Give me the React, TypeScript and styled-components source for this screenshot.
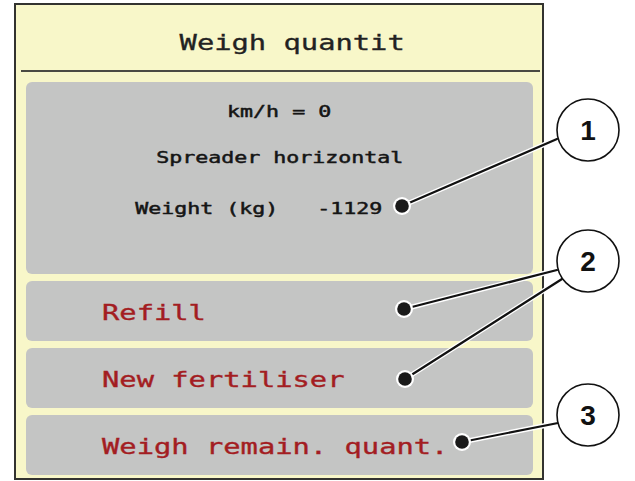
import styled, { createGlobalStyle } from "styled-components"

const GlobalStyle = createGlobalStyle`
  html, body {
    margin: 0;
    padding: 0;
    background: #ffffff;
  }
`

const Page = styled.div`
  position: relative;
  width: 635px;
  height: 481px;
  padding: 3px 0 0 14px;
  box-sizing: border-box;
  font-family: 'DejaVu Sans Mono', 'Liberation Mono', monospace;
`

const Screen = styled.div`
  width: 530px;
  height: 477px;
  box-sizing: border-box;
  border: 2px solid #333330;
  background: #f8f7c9;
  display: flex;
  flex-direction: column;
`

const Header = styled.div`
  height: 66px;
  box-sizing: border-box;
  padding: 26px 0 0 27px;
  text-align: center;
  font-size: 21px;
  line-height: 24px;
  color: #222222;
  -webkit-text-stroke: 0.3px #222222;
`

const Rule = styled.div`
  height: 2px;
  margin: 0 2px 0 5px;
  background: #4a4a42;
`

const Content = styled.div`
  flex: 1;
  display: flex;
  flex-direction: column;
  gap: 7px;
  padding: 10px 9px 3px 10px;
`

const Panel = styled.div<{ $h: number }>`
  height: ${props => props.$h}px;
  flex: none;
  background: #c4c5c4;
  border-radius: 6px;
  box-sizing: border-box;
`

const StatusPanel = styled(Panel)`
  display: flex;
  flex-direction: column;
  align-items: center;
  padding-top: 20px;
`

const StatusRow = styled.div<{ $top: number; $shift?: number }>`
  margin-top: ${props => props.$top}px;
  padding-right: ${props => props.$shift ?? 0}px;
  font-size: 15px;
  line-height: 20px;
  color: #151515;
  -webkit-text-stroke: 0.45px #151515;
  white-space: pre;
`

const MenuItem = styled(Panel)`
  display: flex;
  align-items: center;
  padding: 4px 0 0 76px;
  font-size: 21px;
  line-height: 24px;
  color: #a31d22;
  -webkit-text-stroke: 0.35px #a31d22;
`

const Wide = styled.span<{ $scale: number; $origin?: string }>`
  display: inline-block;
  white-space: pre;
  transform: scaleX(${props => props.$scale});
  transform-origin: ${props => props.$origin ?? "center"};
`

const Callouts = styled.svg`
  position: absolute;
  left: 0;
  top: 0;
  width: 635px;
  height: 481px;
  pointer-events: none;
`

const Num = styled.text`
  font-family: 'Liberation Sans', Arial, sans-serif;
  font-weight: 700;
  font-size: 28px;
  fill: #111111;
`

const leaders = [
  { x1: 402, y1: 206, x2: 557, y2: 139 },
  { x1: 404, y1: 309, x2: 557, y2: 270 },
  { x1: 405, y1: 379, x2: 562, y2: 279 },
  { x1: 462, y1: 442, x2: 558, y2: 423 },
]

const bubbles = [
  { cx: 588, cy: 130, label: "1" },
  { cx: 588, cy: 261, label: "2" },
  { cx: 588, cy: 415, label: "3" },
]

export default function App() {
  return (
    <Page>
      <GlobalStyle />
      <Screen>
        <Header>
          <Wide $scale={1.37}>Weigh quantit</Wide>
        </Header>
        <Rule />
        <Content>
          <StatusPanel $h={192}>
            <StatusRow $top={0}>
              <Wide $scale={1.44}>km/h = 0</Wide>
            </StatusRow>
            <StatusRow $top={26}>
              <Wide $scale={1.44}>Spreader horizontal</Wide>
            </StatusRow>
            <StatusRow $top={31} $shift={41}>
              <Wide $scale={1.44}>Weight (kg)   -1129</Wide>
            </StatusRow>
          </StatusPanel>
          <MenuItem $h={60}>
            <Wide $scale={1.37} $origin="left">Refill</Wide>
          </MenuItem>
          <MenuItem $h={60}>
            <Wide $scale={1.37} $origin="left">New fertiliser</Wide>
          </MenuItem>
          <MenuItem $h={60}>
            <Wide $scale={1.37} $origin="left">Weigh remain. quant.</Wide>
          </MenuItem>
        </Content>
      </Screen>

      <Callouts viewBox="0 0 635 481">
        {leaders.map((l, i) => (
          <g key={i}>
            <line {...l} stroke="#ffffff" strokeWidth={5} strokeLinecap="round" />
            <line {...l} stroke="#111111" strokeWidth={2.2} strokeLinecap="round" />
            <circle cx={l.x1} cy={l.y1} r={9} fill="#ffffff" />
            <circle cx={l.x1} cy={l.y1} r={6.8} fill="#1a1a1a" />
          </g>
        ))}
        {bubbles.map(b => (
          <g key={b.label}>
            <circle cx={b.cx} cy={b.cy} r={31} fill="#ffffff" stroke="#111111" strokeWidth={1.6} />
            <Num x={b.cx} y={b.cy + 10} textAnchor="middle">{b.label}</Num>
          </g>
        ))}
      </Callouts>
    </Page>
  )
}
